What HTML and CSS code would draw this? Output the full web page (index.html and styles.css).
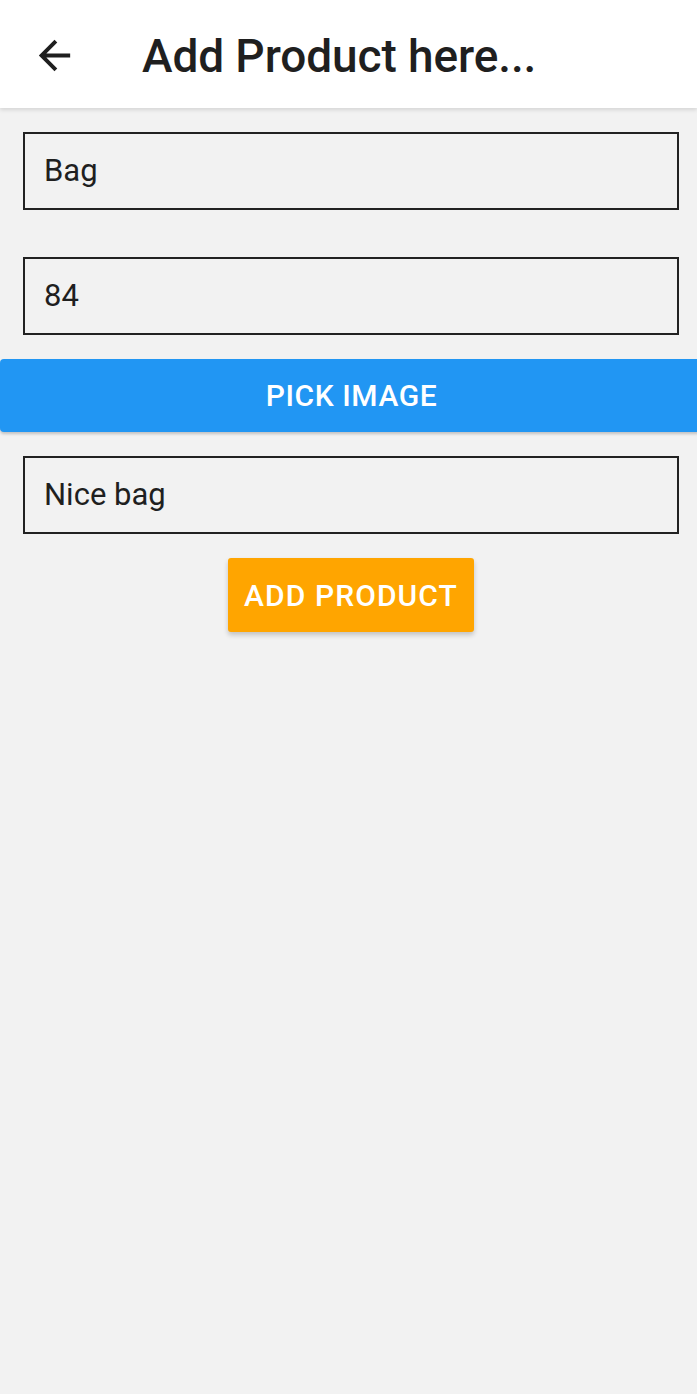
FILE: index.html
```html
<!DOCTYPE html>
<html>
<head>
<meta charset="utf-8">
<link rel="stylesheet" href="styles.css">
</head>
<body>
<header class="appbar">
  <svg class="back" viewBox="0 0 24 24" width="47" height="47"><path d="M20 11H7.83l5.59-5.59L12 4l-8 8 8 8 1.41-1.41L7.83 13H20v-2z" fill="#1f1f1f"/></svg>
  <h1 class="title">Add Product here...</h1>
</header>
<main class="form">
  <div class="field">Bag</div>
  <div class="field second">84</div>
  <button class="pick">PICK IMAGE</button>
  <div class="field third">Nice bag</div>
  <div class="actions"><button class="add">ADD PRODUCT</button></div>
</main>
</body>
</html>
```
FILE: styles.css
```css
html, body {
  margin: 0;
  padding: 0;
  background: #f2f2f2;
  font-family: Roboto, "Noto Sans", sans-serif;
  color: #1f1f1f;
}
body {
  width: 697px;
  height: 1394px;
  overflow: hidden;
}
.appbar {
  height: 108px;
  background: #ffffff;
  display: flex;
  align-items: center;
  box-shadow: 0 2px 4px rgba(0,0,0,0.12);
  position: relative;
  z-index: 1;
}
.back {
  margin-left: 31px;
  margin-top: 2px;
}
.title {
  margin: 3px 0 0 64px;
  font-size: 46px;
  font-weight: 500;
  letter-spacing: -0.1px;
  color: #1f1f1f;
}
.form {
  display: flex;
  flex-direction: column;
  padding-top: 24px;
}
.field {
  margin: 0 18px 0 23px;
  height: 74px;
  border: 2px solid #222;
  box-sizing: content-box;
  display: flex;
  align-items: center;
  padding-left: 19px;
  font-size: 31px;
  line-height: 76px;
  color: #1f1f1f;
}
.second { margin-top: 47px; }
.third { margin-top: 24px; }
.pick {
  margin-top: 24px;
  height: 73px;
  width: 701px;
  border: none;
  border-radius: 4px;
  background: #2196f3;
  color: #fff;
  font-family: Roboto, sans-serif;
  font-weight: 500;
  font-size: 30px;
  letter-spacing: 0.6px;
  box-shadow: 0 2px 3px rgba(0,0,0,0.2);
  padding: 0 0 0 2px;
  text-align: center;
}
.actions {
  display: flex;
  justify-content: center;
  margin-top: 24px;
}
.add {
  margin-left: 5px;
  width: 246px;
  height: 74px;
  border: none;
  border-radius: 3px;
  background: #ffa500;
  color: #fff;
  font-family: Roboto, sans-serif;
  font-weight: 500;
  font-size: 30px;
  letter-spacing: 1.1px;
  padding: 0;
  box-shadow: 0 3px 5px rgba(0,0,0,0.2);
}
```
